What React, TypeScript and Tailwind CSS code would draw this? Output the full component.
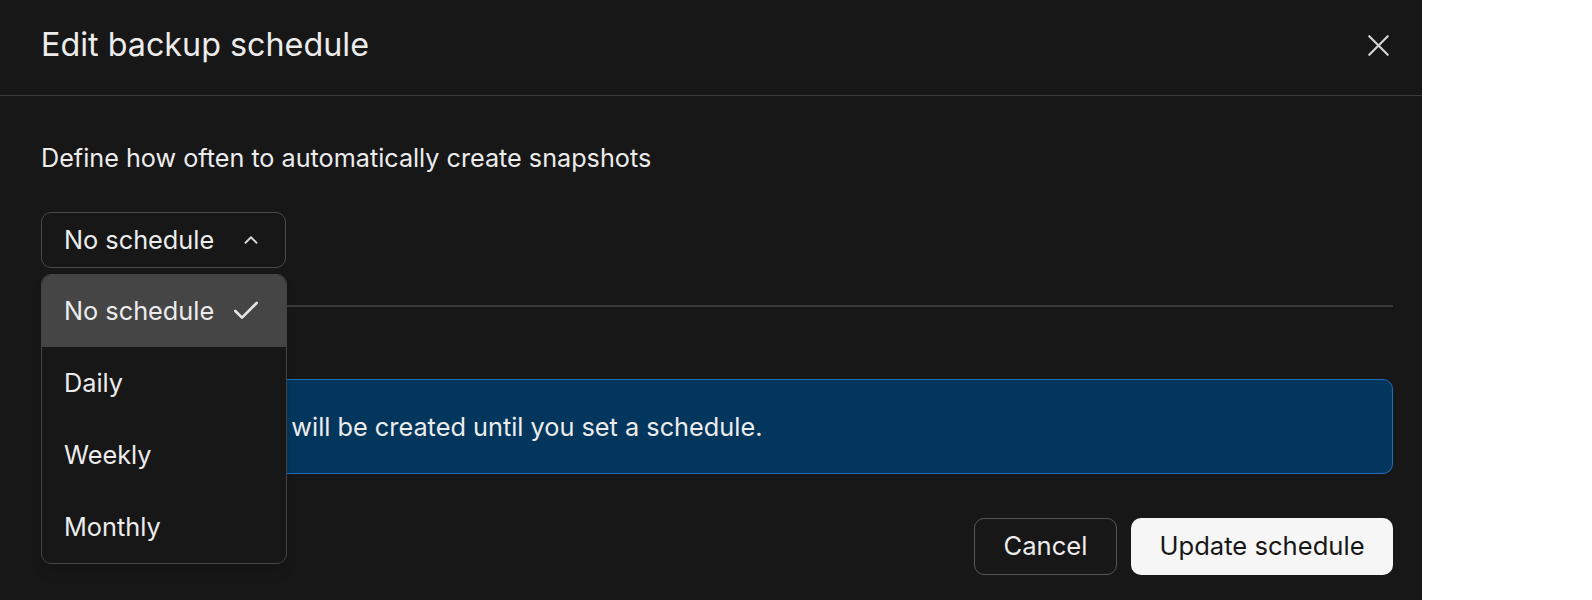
import { Check, ChevronUp, Info, X } from 'lucide-react';

const options = ['No schedule', 'Daily', 'Weekly', 'Monthly'];

export default function App() {
    const selected = 'No schedule';

    return (
        <div className="flex h-[600px] w-full bg-white font-['Inter',sans-serif] text-[#ececec]">
            <div className="flex h-[600px] w-[1422px] flex-col overflow-hidden bg-[#171717]">
                {/* Header */}
                <div className="flex h-[96px] shrink-0 items-center justify-between border-b border-[#3b3b3b] pb-[4px] pl-[41px] pr-[25px]">
                    <h2 className="text-[32.3px] font-normal leading-none">Edit backup schedule</h2>
                    <button type="button" className="text-[#d4d4d4]">
                        <X size={37} strokeWidth={1.4} />
                    </button>
                </div>

                {/* Body */}
                <div className="flex flex-col pl-[41px] pr-[29px] pt-[44px]">
                    <p className="text-[25.2px] leading-[36px]">Define how often to automatically create snapshots</p>

                    <div className="relative mt-[36px]">
                        <button
                            type="button"
                            className="flex h-[56px] w-[245px] items-center justify-between rounded-[10px] border border-[#4a4a4a] pl-[22px] pr-[23px] text-[25.3px]"
                        >
                            <span>{selected}</span>
                            <ChevronUp size={22} strokeWidth={2} className="text-[#d9d9d9]" />
                        </button>

                        {/* Open dropdown menu */}
                        <div className="absolute left-0 top-[62px] z-10 w-[246px] overflow-hidden rounded-[10px] border border-[#444444] bg-[#171717] shadow-lg">
                            {options.map((opt) => (
                                <div
                                    key={opt}
                                    className={`flex h-[72px] items-center justify-between pl-[22px] pr-[24px] text-[25.3px] ${
                                        opt === selected ? 'bg-[#454545]' : ''
                                    }`}
                                >
                                    <span>{opt}</span>
                                    {opt === selected && <Check size={32} strokeWidth={2} className="text-[#e5e5e5]" />}
                                </div>
                            ))}
                        </div>
                    </div>

                    <div className="mt-[37px] h-[2px] bg-[#3a3a3a]" />

                    <div className="mt-[72px] flex h-[95px] items-center gap-[26px] rounded-[10px] border border-[#1f6fb8] bg-[#03365c] px-[24px] text-[25.3px]">
                        <Info size={28} className="shrink-0 text-[#9cc8f0]" />
                        <span>No snapshots will be created until you set a schedule.</span>
                    </div>

                    <div className="mt-[44px] flex justify-end gap-[14px]">
                        <button
                            type="button"
                            className="flex h-[57px] w-[143px] items-center justify-center rounded-[10px] border border-[#555555] text-[25.6px]"
                        >
                            Cancel
                        </button>
                        <button
                            type="button"
                            className="flex h-[57px] w-[262px] items-center justify-center rounded-[10px] bg-[#f6f6f6] text-[25.6px] text-[#171717]"
                        >
                            Update schedule
                        </button>
                    </div>
                </div>
            </div>
        </div>
    );
}
